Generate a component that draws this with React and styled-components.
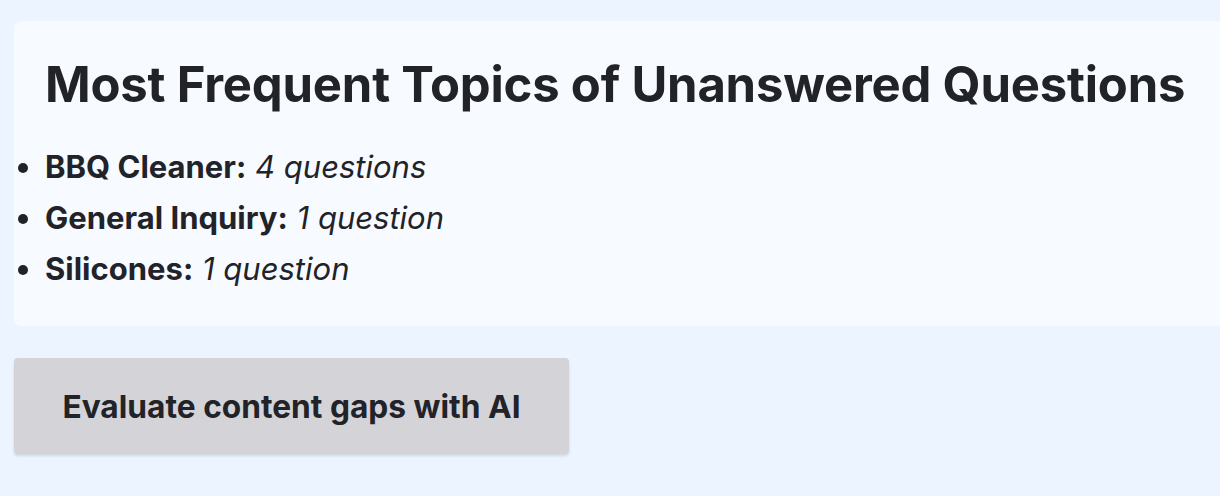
import React from "react";
import styled, { createGlobalStyle } from "styled-components";

const Global = createGlobalStyle`
  html, body { margin: 0; padding: 0; }
  body {
    background: #ebf4ff;
    font-family: Inter, "Noto Sans", sans-serif;
    color: #222328;
    overflow: hidden;
    width: 1220px;
    height: 496px;
  }
`;

const Page = styled.div`
  padding: 21px 0 0 14px;
  display: flex;
  flex-direction: column;
  align-items: flex-start;
  gap: 32px;
`;

const Card = styled.section`
  width: 1240px;
  box-sizing: border-box;
  background: #f7fbff;
  border-radius: 7px;
  padding: 34px 31px 32px;
`;

const Title = styled.h2`
  margin: 0 0 26px;
  font-size: 49px;
  font-weight: 700;
  line-height: 60px;
  letter-spacing: -0.2px;
`;

const List = styled.ul`
  margin: 0;
  padding: 0;
  list-style: disc outside;
`;

const Item = styled.li`
  font-size: 31px;
  line-height: 51px;
`;

const Label = styled.strong`
  font-weight: 700;
`;

const Count = styled.em`
  font-style: italic;
`;

const Button = styled.button`
  width: 555px;
  height: 96px;
  border: none;
  border-radius: 4px;
  background: #d4d4d8;
  box-shadow: 0 2px 3px rgba(0, 0, 0, 0.12);
  font-family: Inter, "Noto Sans", sans-serif;
  font-size: 31.7px;
  font-weight: 700;
  color: #222328;
  cursor: pointer;
`;

const topics = [
  { name: "BBQ Cleaner", count: "4 questions" },
  { name: "General Inquiry", count: "1 question" },
  { name: "Silicones", count: "1 question" },
];

export default function App() {
  return (
    <>
      <Global />
      <Page>
        <Card>
          <Title>Most Frequent Topics of Unanswered Questions</Title>
          <List>
            {topics.map((t) => (
              <Item key={t.name}>
                <Label>{t.name}:</Label> <Count>{t.count}</Count>
              </Item>
            ))}
          </List>
        </Card>
        <Button>Evaluate content gaps with AI</Button>
      </Page>
    </>
  );
}
